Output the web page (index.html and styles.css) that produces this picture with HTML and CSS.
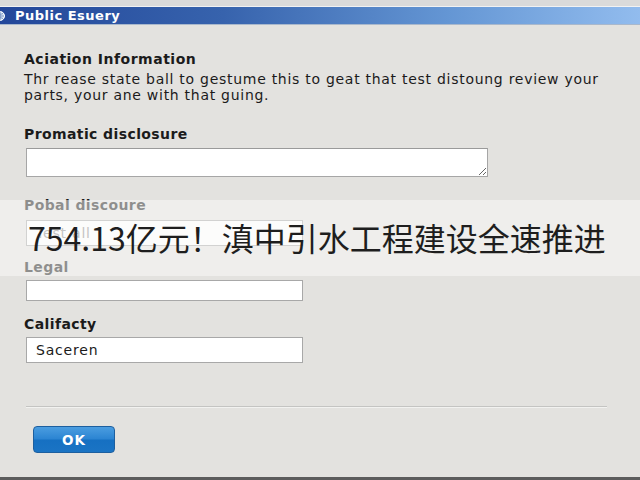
FILE: index.html
```html
<!DOCTYPE html>
<html lang="en">
<head>
<meta charset="utf-8">
<title>Public Esuery</title>
<link rel="stylesheet" href="styles.css">
</head>
<body>
<div class="screen">
  <div class="topstrip"></div>
  <div class="titlebar">
    <svg class="ticon" width="12" height="12" viewBox="0 0 12 12" aria-hidden="true">
      <circle cx="6" cy="6" r="4.5" fill="#dfe8f5" stroke="#ffffff" stroke-width="1"/>
      <path d="M2 6h8M6 1.5v9M3 3.5c2 1 4 1 6 0M3 8.5c2-1 4-1 6 0" stroke="#5b7fb8" stroke-width="0.8" fill="none"/>
    </svg>
    <span class="ttext">Public Esuery</span>
  </div>
  <div class="content">
    <h2 class="heading">Aciation Information</h2>
    <p class="para">Thr rease state ball to gestume this to geat that test distoung review your parts, your ane with that guing.</p>

    <label class="lbl lbl1">Promatic disclosure</label>
    <textarea class="area"></textarea>

    <label class="lbl lbl2">Pobal discoure</label>
    <input class="field f1" type="text" placeholder="Test all">

    <label class="lbl lbl3">Legal</label>
    <input class="field f2" type="text">

    <label class="lbl lbl4">Califacty</label>
    <input class="field f3" type="text" value="Saceren">

    <div class="sep"></div>
    <button class="ok">OK</button>
  </div>
  <div class="overlay">754.13亿元！滇中引水工程建设全速推进</div>
</div>
</body>
</html>
```
FILE: styles.css
```css
html, body {
  margin: 0;
  padding: 0;
}
body {
  width: 640px;
  height: 480px;
  overflow: hidden;
  background: #e3e2df;
  font-family: "DejaVu Sans", Verdana, sans-serif;
  color: #1b1b1b;
}
.screen {
  position: relative;
  width: 640px;
  height: 480px;
  display: flex;
  flex-direction: column;
  box-sizing: border-box;
  border-bottom: 3px solid #5c5c5c;
}
.topstrip {
  height: 6px;
  background: #dadada;
  border-bottom: 1px solid #f2f2f2;
}
.titlebar {
  height: 17px;
  display: flex;
  align-items: center;
  background: linear-gradient(to right, #23479a 0%, #3763ad 35%, #6496d4 70%, #92bcee 100%);
  border-bottom: 1px solid #a9b8cc;
}
.ticon {
  margin-left: -6px;
  flex: none;
}
.ttext {
  margin-left: 9px;
  color: #ffffff;
  font-weight: bold;
  font-size: 13px;
  letter-spacing: 0.5px;
}
.content {
  flex: 1;
  display: flex;
  flex-direction: column;
  align-items: flex-start;
  padding-left: 24px;
}
.heading {
  margin: 26px 0 0 0;
  font-size: 14px;
  line-height: 16px;
  font-weight: bold;
  letter-spacing: 0.5px;
}
.para {
  margin: 4px 0 0 0;
  width: 580px;
  font-size: 14px;
  line-height: 16px;
  letter-spacing: 0.72px;
}
.lbl {
  display: block;
  font-size: 14px;
  line-height: 16px;
  font-weight: bold;
  letter-spacing: 0.4px;
}
.lbl1 { margin-top: 23px; }
.lbl2 { margin-top: 20px; }
.lbl3 { margin-top: 13px; }
.lbl4 { margin-top: 15px; }
.area {
  margin: 6px 0 0 2px;
  width: 462px;
  height: 29px;
  box-sizing: border-box;
  border: 1px solid #a6a6a6;
  border-top-color: #9a9a9a;
  background: #ffffff;
  padding: 2px 4px;
  font-family: inherit;
}
.field {
  margin: 0 0 0 2px;
  width: 277px;
  box-sizing: border-box;
  border: 1px solid #a8a8a8;
  background: #ffffff;
  padding: 0 9px;
  font-family: "DejaVu Sans", Verdana, sans-serif;
  font-size: 14px;
  letter-spacing: 0.8px;
  color: #1b1b1b;
  outline: none;
}
.field::placeholder { color: #8a8a8a; }
.f1 { margin-top: 7px; height: 26px; }
.f2 { margin-top: 5px; height: 21px; }
.f3 { margin-top: 5px; height: 26px; }
.sep {
  margin: 43px 0 0 2px;
  width: 581px;
  height: 1px;
  background: #c4c4c2;
  border-bottom: 1px solid #f2f2f0;
}
.ok {
  margin: 18px 0 0 9px;
  width: 82px;
  height: 27px;
  border: 1px solid #1d5f9f;
  border-radius: 4px;
  background: linear-gradient(to bottom, #4b9de0 0%, #2b84d2 48%, #1670c2 52%, #1b74c4 100%);
  color: #ffffff;
  font-family: "DejaVu Sans", Verdana, sans-serif;
  font-weight: bold;
  font-size: 13.5px;
  letter-spacing: 1px;
  padding: 0;
}
.overlay {
  position: absolute;
  left: 0;
  top: 200px;
  width: 640px;
  height: 76px;
  box-sizing: border-box;
  padding-left: 28px;
  padding-bottom: 2px;
  display: flex;
  align-items: center;
  background: rgba(249, 249, 248, 0.52);
  font-family: "Noto Sans CJK SC", sans-serif;
  font-size: 32px;
  color: #1e1e1e;
}
```
